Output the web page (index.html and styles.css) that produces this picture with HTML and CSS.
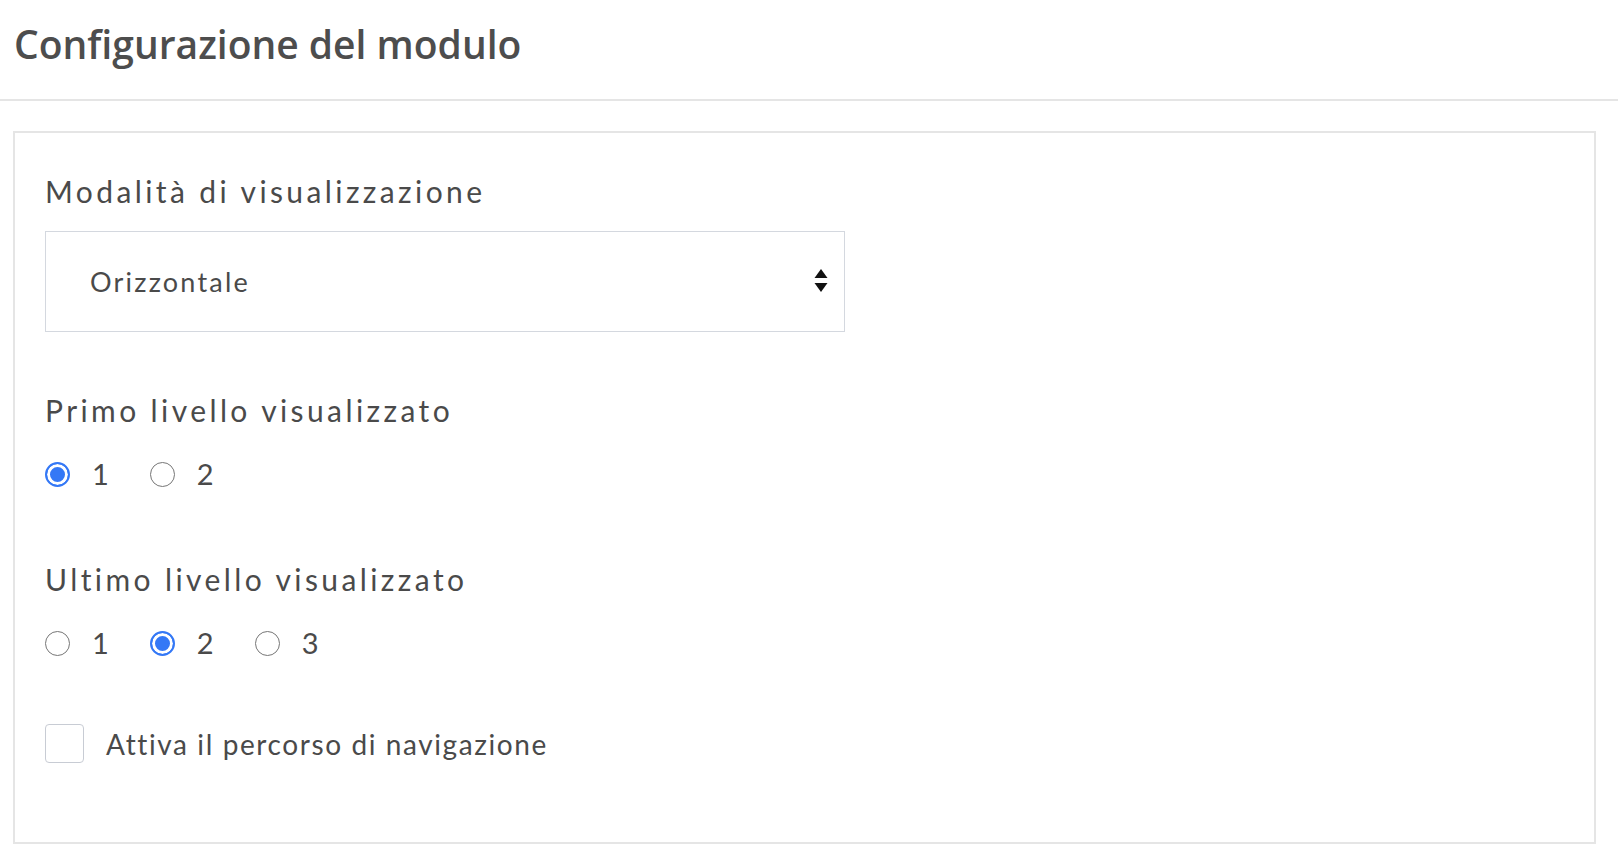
FILE: index.html
```html
<!DOCTYPE html>
<html lang="it">
<head>
    <meta charset="UTF-8">
    <meta name="viewport" content="width=device-width, initial-scale=1.0">
    <title>Configurazione del modulo</title>
    <link rel="stylesheet" href="styles.css">
</head>
<body>

    <div class="page-header">
        <h1>Configurazione del modulo</h1>
    </div>

    <div class="module-card">
        <form class="module-form">

            <div class="field">
                <label class="field-label" for="display-mode">Modalità di visualizzazione</label>
                <div class="select-wrap">
                    <select id="display-mode" class="select-input">
                        <option selected>Orizzontale</option>
                        <option>Verticale</option>
                    </select>
                    <svg class="select-arrows" width="14" height="24" viewBox="0 0 14 24">
                        <path d="M7 0 L13.5 9 L0.5 9 Z" fill="#111"/>
                        <path d="M0.5 14 L13.5 14 L7 23 Z" fill="#111"/>
                    </svg>
                </div>
            </div>

            <div class="field">
                <span class="field-label">Primo livello visualizzato</span>
                <div class="radio-row">
                    <label class="radio-option"><input type="radio" name="first-level" checked><span>1</span></label>
                    <label class="radio-option"><input type="radio" name="first-level"><span>2</span></label>
                </div>
            </div>

            <div class="field field-last">
                <span class="field-label">Ultimo livello visualizzato</span>
                <div class="radio-row">
                    <label class="radio-option"><input type="radio" name="last-level"><span>1</span></label>
                    <label class="radio-option"><input type="radio" name="last-level" checked><span>2</span></label>
                    <label class="radio-option"><input type="radio" name="last-level"><span>3</span></label>
                </div>
            </div>

            <div class="field field-check">
                <label class="check-option"><input type="checkbox"><span>Attiva il percorso di navigazione</span></label>
            </div>

        </form>
    </div>

</body>
</html>
```

FILE: styles.css
```css
/* --- Theme colors --- */
:root {
    --text-color: #4a4a4a;
    --heading-color: #4d4d4d;
    --line-color: #e5e5e5;
    --input-border: #d4d8df;
    --accent-color: #3478f6;
    --radio-border: #767676;
}

/* --- General --- */
body {
    margin: 0;
    background-color: #ffffff;
    color: var(--text-color);
    font-family: 'Lato', 'Open Sans', sans-serif;
}

/* --- Header --- */
.page-header {
    height: 99px;
    padding-left: 14px;
    border-bottom: 2px solid var(--line-color);
    box-sizing: content-box;
}

.page-header h1 {
    margin: 0;
    padding-top: 21px;
    font-family: 'Open Sans', sans-serif;
    font-weight: 600;
    font-size: 39px;
    line-height: 46px;
    color: var(--heading-color);
}

/* --- Card --- */
.module-card {
    margin: 30px 22px 0 13px;
    border: 2px solid var(--line-color);
    padding: 40px 30px 79px 30px;
}

.module-form {
    display: flex;
    flex-direction: column;
}

.field {
    display: flex;
    flex-direction: column;
    align-items: flex-start;
}

.field + .field {
    margin-top: 60px;
}

.field-last {
    margin-top: 69px !important;
}

.field-label {
    font-size: 30px;
    line-height: 36px;
    letter-spacing: 3.4px;
    color: var(--text-color);
    margin-bottom: 22px;
}

/* --- Select --- */
.select-wrap {
    position: relative;
    width: 800px;
}

.select-input {
    appearance: none;
    -webkit-appearance: none;
    width: 100%;
    height: 101px;
    padding: 0 60px 0 44px;
    border: 1.5px solid var(--input-border);
    border-radius: 0;
    background-color: #ffffff;
    font-family: inherit;
    font-size: 27px;
    letter-spacing: 2.2px;
    color: var(--text-color);
    box-sizing: border-box;
}

.select-arrows {
    position: absolute;
    right: 17px;
    top: 38px;
    pointer-events: none;
}

/* --- Radios --- */
.radio-row {
    display: flex;
    gap: 41px;
    margin-top: 6px;
}

.radio-option {
    display: flex;
    align-items: center;
    gap: 22px;
    font-size: 29px;
    line-height: 36px;
    cursor: pointer;
}

.radio-option input {
    appearance: none;
    -webkit-appearance: none;
    margin: 0;
    width: 25px;
    height: 25px;
    border: 1.5px solid var(--radio-border);
    border-radius: 50%;
    box-sizing: border-box;
    background-color: #ffffff;
}

.radio-option input:checked {
    border: 2.5px solid var(--accent-color);
    background-color: var(--accent-color);
    box-shadow: inset 0 0 0 3px #ffffff;
}

/* --- Checkbox --- */
.field-check {
    margin-top: 63px !important;
}

.check-option {
    display: flex;
    align-items: center;
    gap: 22px;
    font-size: 28px;
    letter-spacing: 1.6px;
    cursor: pointer;
}

.check-option input {
    appearance: none;
    -webkit-appearance: none;
    margin: 0;
    width: 39px;
    height: 39px;
    border: 1.5px solid #c8ccd4;
    border-radius: 4px;
    box-sizing: border-box;
    background-color: #ffffff;
}
```
